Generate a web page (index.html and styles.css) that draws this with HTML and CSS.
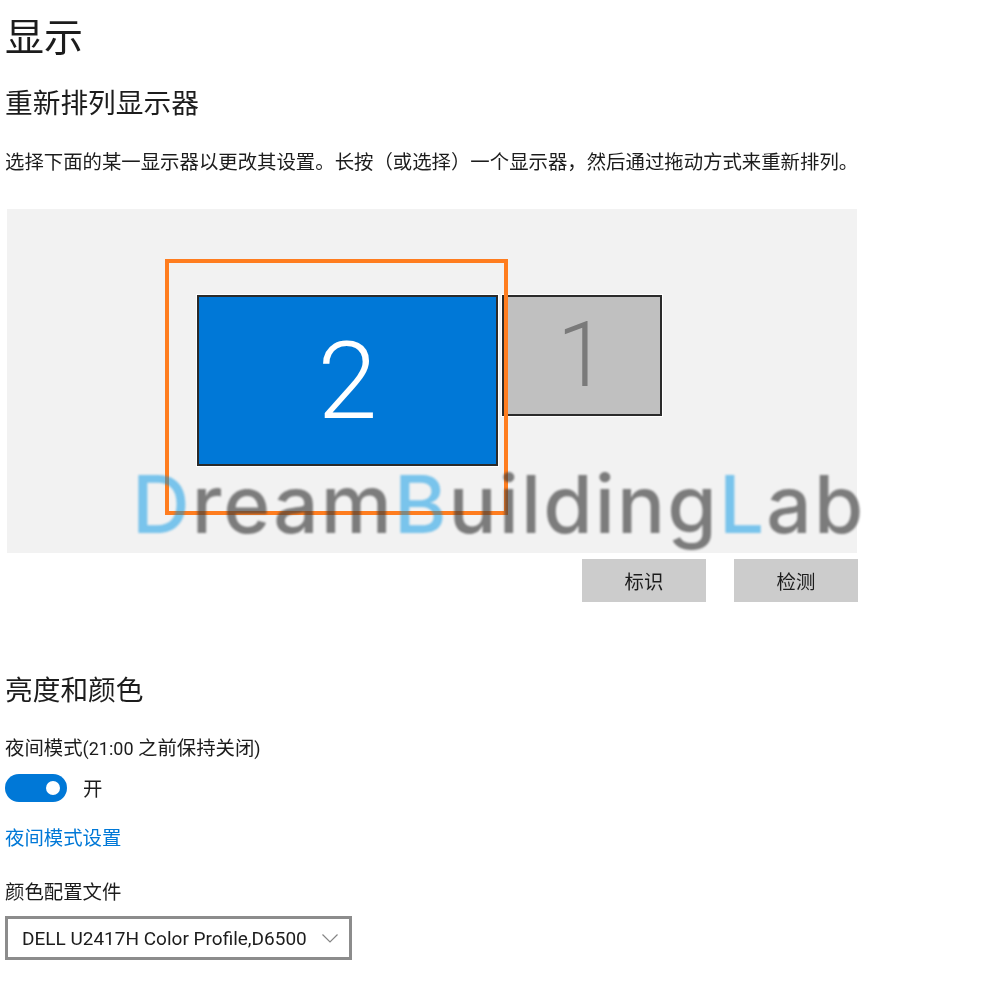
FILE: index.html
```html
<!DOCTYPE html>
<html lang="zh-CN">
<head>
  <meta charset="UTF-8">
  <title>显示</title>
  <link rel="stylesheet" href="styles.css">
</head>
<body>

<div class="settings-page">
  <h1 class="page-title">显示</h1>

  <h2 class="section-title">重新排列显示器</h2>
  <p class="section-description">选择下面的某一显示器以更改其设置。长按（或选择）一个显示器，然后通过拖动方式来重新排列。</p>

  <div class="display-panel">
    <div class="monitor monitor-selected">2</div>
    <div class="monitor monitor-other">1</div>
    <div class="highlight-box"></div>
    <div class="watermark"><span class="watermark-accent">D</span>ream<span class="watermark-accent">B</span>uilding<span class="watermark-accent">L</span>ab</div>
  </div>

  <div class="panel-actions">
    <button class="action-button">标识</button>
    <button class="action-button">检测</button>
  </div>

  <h2 class="section-title section-title-brightness">亮度和颜色</h2>

  <div class="field-label night-label">夜间模式<span class="latin-text">(21:00 </span>之前保持关闭<span class="latin-text">)</span></div>
  <div class="toggle-row">
    <div class="toggle"><span class="toggle-knob"></span></div>
    <span class="toggle-text">开</span>
  </div>

  <a class="settings-link" href="#">夜间模式设置</a>

  <div class="field-label profile-label">颜色配置文件</div>
  <div class="select-box">
    <span>DELL U2417H Color Profile,D6500</span>
    <svg class="select-arrow" width="16" height="9" viewBox="0 0 16 9">
      <path d="M0.5 0.5 L8 8 L15.5 0.5" fill="none" stroke="#858585" stroke-width="1.2"/>
    </svg>
  </div>
</div>

</body>
</html>
```

FILE: styles.css
```css
:root {
  --accent-blue: #0078d7;
  --panel-bg: #f2f2f2;
  --button-bg: #cccccc;
  --monitor-border: #2b2b2b;
  --text-color: #1c1c1c;
}

* {
  margin: 0;
  padding: 0;
  box-sizing: border-box;
}

html, body {
  height: 100%;
  background: white;
  overflow: hidden;
}

body {
  font-family: Roboto, "Noto Sans CJK SC", sans-serif;
  color: var(--text-color);
}

.settings-page {
  width: 853px;
  margin-left: 5px;
  display: flex;
  flex-direction: column;
  align-items: flex-start;
  filter: blur(0.4px);
}

.page-title {
  font-size: 39px;
  font-weight: 400;
  line-height: 48px;
  margin-top: 14px;
}

.section-title {
  font-size: 27.7px;
  font-weight: 400;
  line-height: 36px;
  margin-top: 24px;
}

.section-description {
  font-size: 19.4px;
  line-height: 26px;
  margin-top: 28px;
  white-space: nowrap;
}

.display-panel {
  position: relative;
  width: 850px;
  height: 344px;
  margin-top: 33px;
  margin-left: 2px;
  padding: 86px 0 0 190px;
  background: var(--panel-bg);
  display: flex;
  align-items: flex-start;
  gap: 4px;
}

.monitor {
  border: 2px solid var(--monitor-border);
  outline: 1px solid white;
  display: flex;
  justify-content: center;
  align-items: center;
  font-family: Roboto, sans-serif;
  font-weight: 300;
  font-size: 108px;
}

.monitor-selected {
  width: 301px;
  height: 171px;
  background: var(--accent-blue);
  color: white;
}

.monitor-other {
  width: 160px;
  height: 121px;
  background: #c0c0c0;
  color: #7a7a7a;
  font-size: 90px;
}

.highlight-box {
  position: absolute;
  left: 158px;
  top: 50px;
  width: 343px;
  height: 256px;
  border: 4px solid #ff7d1f;
}

.watermark {
  position: absolute;
  left: 125px;
  top: 245px;
  font-family: Inter, sans-serif;
  font-size: 80px;
  font-weight: 500;
  line-height: 100px;
  letter-spacing: 2.1px;
  white-space: nowrap;
  color: rgba(60, 60, 60, 0.65);
  filter: blur(0.8px);
}

.watermark-accent {
  color: rgba(0, 150, 230, 0.5);
}

.panel-actions {
  align-self: stretch;
  display: flex;
  justify-content: flex-end;
  gap: 28px;
  margin-top: 6px;
}

.action-button {
  width: 124px;
  height: 43px;
  border: none;
  background: var(--button-bg);
  color: var(--text-color);
  font-family: inherit;
  font-size: 19.4px;
}

.section-title-brightness {
  margin-top: 71px;
}

.field-label {
  font-size: 19.4px;
  line-height: 26px;
}

.latin-text {
  font-size: 18px;
}

.night-label {
  margin-top: 27px;
}

.toggle-row {
  display: flex;
  align-items: center;
  gap: 16px;
  margin-top: 11px;
  font-size: 19.4px;
}

.toggle {
  width: 62px;
  height: 28px;
  border-radius: 14px;
  background: var(--accent-blue);
  display: flex;
  justify-content: flex-end;
  align-items: center;
  padding-right: 7px;
}

.toggle-knob {
  width: 14px;
  height: 14px;
  border-radius: 50%;
  background: white;
}

.settings-link {
  font-size: 19.4px;
  line-height: 26px;
  margin-top: 24px;
  color: var(--accent-blue);
  text-decoration: none;
}

.profile-label {
  margin-top: 28px;
}

.select-box {
  width: 347px;
  height: 44px;
  margin-top: 10px;
  padding: 0 11px 0 14px;
  border: 3px solid #8c8c8c;
  display: flex;
  justify-content: space-between;
  align-items: center;
  font-size: 19px;
  white-space: nowrap;
}
```
